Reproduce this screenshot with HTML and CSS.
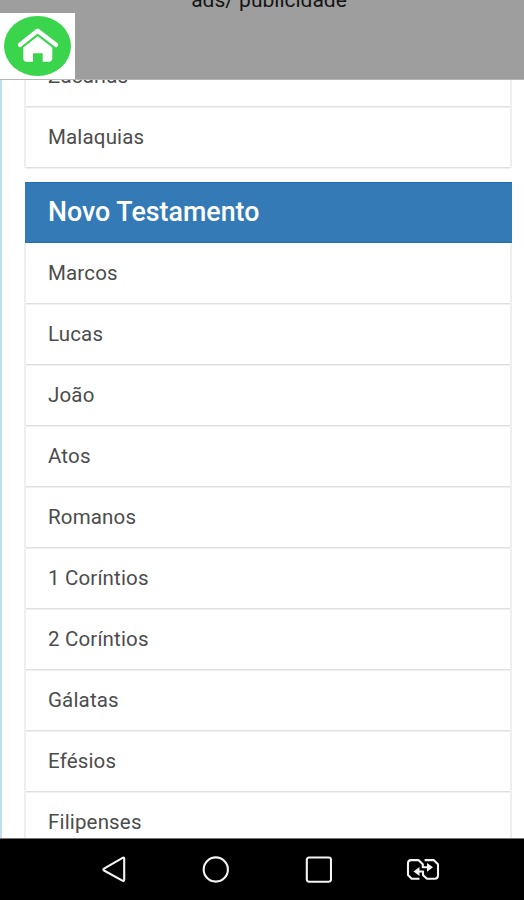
FILE: index.html
```html
<!DOCTYPE html>
<html lang="pt">
<head>
<meta charset="utf-8">
<title>Bíblia</title>
<link rel="stylesheet" href="styles.css">
</head>
<body>
<header class="ad-bar">
  <p class="ad-text"><span>ads/ publicidade</span></p>
  <a class="home" aria-label="Home">
    <svg width="75" height="67" viewBox="0 0 75 67">
      <ellipse cx="37.5" cy="33" rx="33.5" ry="30" fill="#3bd54d"/>
      <path d="M20 31.8 L37.6 17.8 L56 31.8" fill="none" stroke="#fff" stroke-width="4.4" stroke-linecap="round" stroke-linejoin="round"/>
      <path d="M23.3 34.5 L37.8 23.2 L52.3 34.5 V45.5 Q52.3 48.6 49 48.8 H42.7 V40.3 H33 V48.8 H26.6 Q23.3 48.6 23.3 45.5 Z" fill="#fff"/>
    </svg>
  </a>
</header>
<main class="page">
  <ul class="list previous">
    <li>Zacarias</li>
    <li>Malaquias</li>
  </ul>
  <section class="books">
    <h2>Novo Testamento</h2>
    <ul class="list">
      <li>Marcos</li>
      <li>Lucas</li>
      <li>João</li>
      <li>Atos</li>
      <li>Romanos</li>
      <li>1 Coríntios</li>
      <li>2 Coríntios</li>
      <li>Gálatas</li>
      <li>Efésios</li>
      <li>Filipenses</li>
    </ul>
  </section>
</main>
<nav class="system-nav">
  <svg width="28" height="30" viewBox="0 0 28 30"><path d="M22.6 2.9 Q24.2 2.1 24.2 3.9 V24.6 Q24.2 26.6 22.4 25.6 L4 15.5 Q2.7 14.5 4 13.6 Z"/></svg>
  <svg width="28" height="30" viewBox="0 0 28 30"><circle cx="13.8" cy="14.5" r="12.1"/></svg>
  <svg width="28" height="30" viewBox="0 0 28 30"><rect x="2.8" y="2.5" width="24.2" height="24.2" rx="2.2"/></svg>
  <svg class="switch" width="34" height="30" viewBox="0 0 34 30">
    <path d="M13.5 23.7 H5.6 L2 20.1 V8.3 Q2 5.1 5.2 5.1 H12.4 L16.8 9.3 V12.3 H21"/>
    <path d="M18.6 5.1 H27.6 L32 9.3 V20.5 Q32 23.7 28.8 23.7 H21 L17 20.1 V16.5 H13"/>
    <path class="tip" d="M21 8.1 L27 12.3 L21 16.7 Z M13.5 12.1 L7.5 16.5 L13.5 20.9 Z"/>
  </svg>
</nav>
</body>
</html>
```
FILE: styles.css
```css
* { box-sizing: border-box; }

body {
  margin: 0;
  height: 900px;
  display: flex;
  flex-direction: column;
  overflow: hidden;
  background: #fff;
  font-family: Roboto, sans-serif;
  color: #4c4c4c;
}

.ad-bar {
  flex: 0 0 80px;
  height: 80px;
  overflow: hidden;
  background: #9e9e9e;
  border-bottom: 1px solid #b4b4b4;
}

.ad-text {
  height: 13px;
  margin: 0;
  padding-left: 14px;
  display: flex;
  align-items: flex-end;
  justify-content: center;
  font-size: 21px;
  line-height: 26px;
  color: #151515;
}

.home {
  display: block;
  width: 75px;
  height: 67px;
  background: #fff;
}

.home svg { display: block; }

.page {
  flex: 1;
  min-height: 0;
  overflow: hidden;
  padding: 0 12px 0 22px;
  border-left: 2px solid #bfe0eb;
}

.list {
  margin: 0;
  padding: 0;
  list-style: none;
  border: solid #efefef;
  border-width: 0 2px;
}

.list li {
  height: 61px;
  padding-left: 22px;
  border-bottom: 1px solid #e0e0e0;
  box-shadow: 0 1px #f0f0f0;
  font-size: 20.5px;
  line-height: 60px;
  letter-spacing: 0.16px;
}

.previous { margin-top: -34px; }

.books { margin-top: 14px; }

.books h2 {
  height: 61px;
  margin: 0 0 0 1px;
  padding-left: 23px;
  background: #337ab7;
  border: solid #1f6fb2;
  border-width: 1px 0;
  color: #fff;
  font-size: 26.8px;
  font-weight: 500;
  line-height: 59px;
}

.system-nav {
  flex: 0 0 62px;
  display: flex;
  align-items: center;
  gap: 75px;
  padding-left: 100px;
  background: #000;
  border-top: 1px solid #777;
}

.system-nav svg {
  flex: none;
  margin-right: -1px;
  fill: none;
  stroke: #f4f4f4;
  stroke-width: 2.1;
  stroke-linejoin: round;
}

.system-nav .tip {
  fill: #f4f4f4;
  stroke: none;
}
```
